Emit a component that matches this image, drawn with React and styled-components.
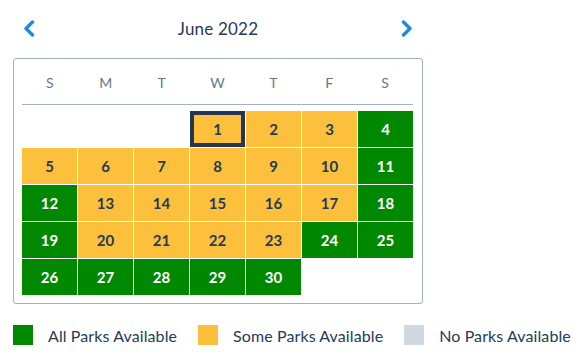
import React from 'react';
import styled, { createGlobalStyle } from 'styled-components';

const GlobalStyle = createGlobalStyle`
  body {
    margin: 0;
    background: #fff;
    font-family: Lato, "Open Sans", sans-serif;
    color: #253b56;
  }
`;

const Page = styled.div`
  width: 586px;
  height: 358px;
  padding: 12px 0 0 13px;
  box-sizing: border-box;
`;

const Header = styled.div`
  width: 410px;
  height: 32px;
  display: flex;
  align-items: center;
  justify-content: space-between;
  padding: 0 10px;
  box-sizing: border-box;
  margin-bottom: 14px;
`;

const NavButton = styled.button`
  border: none;
  background: none;
  padding: 0;
  width: 12px;
  height: 18px;
  display: flex;
  align-items: center;
  justify-content: center;
  cursor: pointer;
`;

const Title = styled.div`
  font-size: 17px;
  letter-spacing: 0.2px;
  color: #253b56;
`;

const Box = styled.div`
  width: 410px;
  box-sizing: border-box;
  border: 1px solid #a3b1c2;
  border-radius: 3px;
  padding: 0 9px 8px 8px;
`;

const Weekdays = styled.div`
  display: grid;
  grid-template-columns: repeat(7, 1fr);
  height: 45px;
  align-items: center;
  border-bottom: 1px solid #a3b1c2;
  margin-bottom: 6px;
`;

const Weekday = styled.div`
  text-align: center;
  font-size: 14px;
  color: #66788c;
  padding-top: 2px;
`;

const Grid = styled.div`
  display: grid;
  grid-template-columns: repeat(7, 55px);
  grid-auto-rows: 36px;
  gap: 1px;
`;

const colors = {
  all: '#008800',
  some: '#fdc03c',
  none: '#d0d7df',
};

const Day = styled.div`
  display: flex;
  align-items: center;
  justify-content: center;
  font-size: 15px;
  font-weight: 700;
  background: ${p => colors[p.$status]};
  color: ${p => (p.$status === 'all' ? '#ffffff' : '#253b56')};
  box-sizing: border-box;
  border: ${p => (p.$selected ? '4px solid #253552' : 'none')};
`;

const Empty = styled.div``;

const Legend = styled.div`
  display: flex;
  align-items: center;
  gap: 21px;
  margin-top: 21px;
`;

const LegendItem = styled.div`
  display: flex;
  align-items: center;
  gap: 15px;
  font-size: 16px;
  letter-spacing: 0.1px;
  color: #253b56;
`;

const Swatch = styled.span`
  width: 20px;
  height: 20px;
  background: ${p => colors[p.$status]};
`;

const Chevron = ({ dir }) => (
  <svg width="12" height="17" viewBox="0 0 12 17">
    <path
      d={dir === 'left' ? 'M9.5 2 L3 8.5 L9.5 15' : 'M2.5 2 L9 8.5 L2.5 15'}
      fill="none"
      stroke="#1a8cd8"
      strokeWidth="3.4"
      strokeLinecap="round"
      strokeLinejoin="round"
    />
  </svg>
);

const weekdays = ['S', 'M', 'T', 'W', 'T', 'F', 'S'];

const allDays = [4, 11, 12, 18, 19, 24, 25, 26, 27, 28, 29, 30];

function App() {
  const cells = [];
  for (let i = 0; i < 3; i++) cells.push(<Empty key={'e' + i} />);
  for (let d = 1; d <= 30; d++) {
    cells.push(
      <Day key={d} $status={allDays.includes(d) ? 'all' : 'some'} $selected={d === 1}>
        {d}
      </Day>
    );
  }

  return (
    <Page>
      <GlobalStyle />
      <Header>
        <NavButton aria-label="Previous month"><Chevron dir="left" /></NavButton>
        <Title>June 2022</Title>
        <NavButton aria-label="Next month"><Chevron dir="right" /></NavButton>
      </Header>
      <Box>
        <Weekdays>
          {weekdays.map((w, i) => <Weekday key={i}>{w}</Weekday>)}
        </Weekdays>
        <Grid>{cells}</Grid>
      </Box>
      <Legend>
        <LegendItem><Swatch $status="all" />All Parks Available</LegendItem>
        <LegendItem><Swatch $status="some" />Some Parks Available</LegendItem>
        <LegendItem><Swatch $status="none" />No Parks Available</LegendItem>
      </Legend>
    </Page>
  );
}

export default App;
